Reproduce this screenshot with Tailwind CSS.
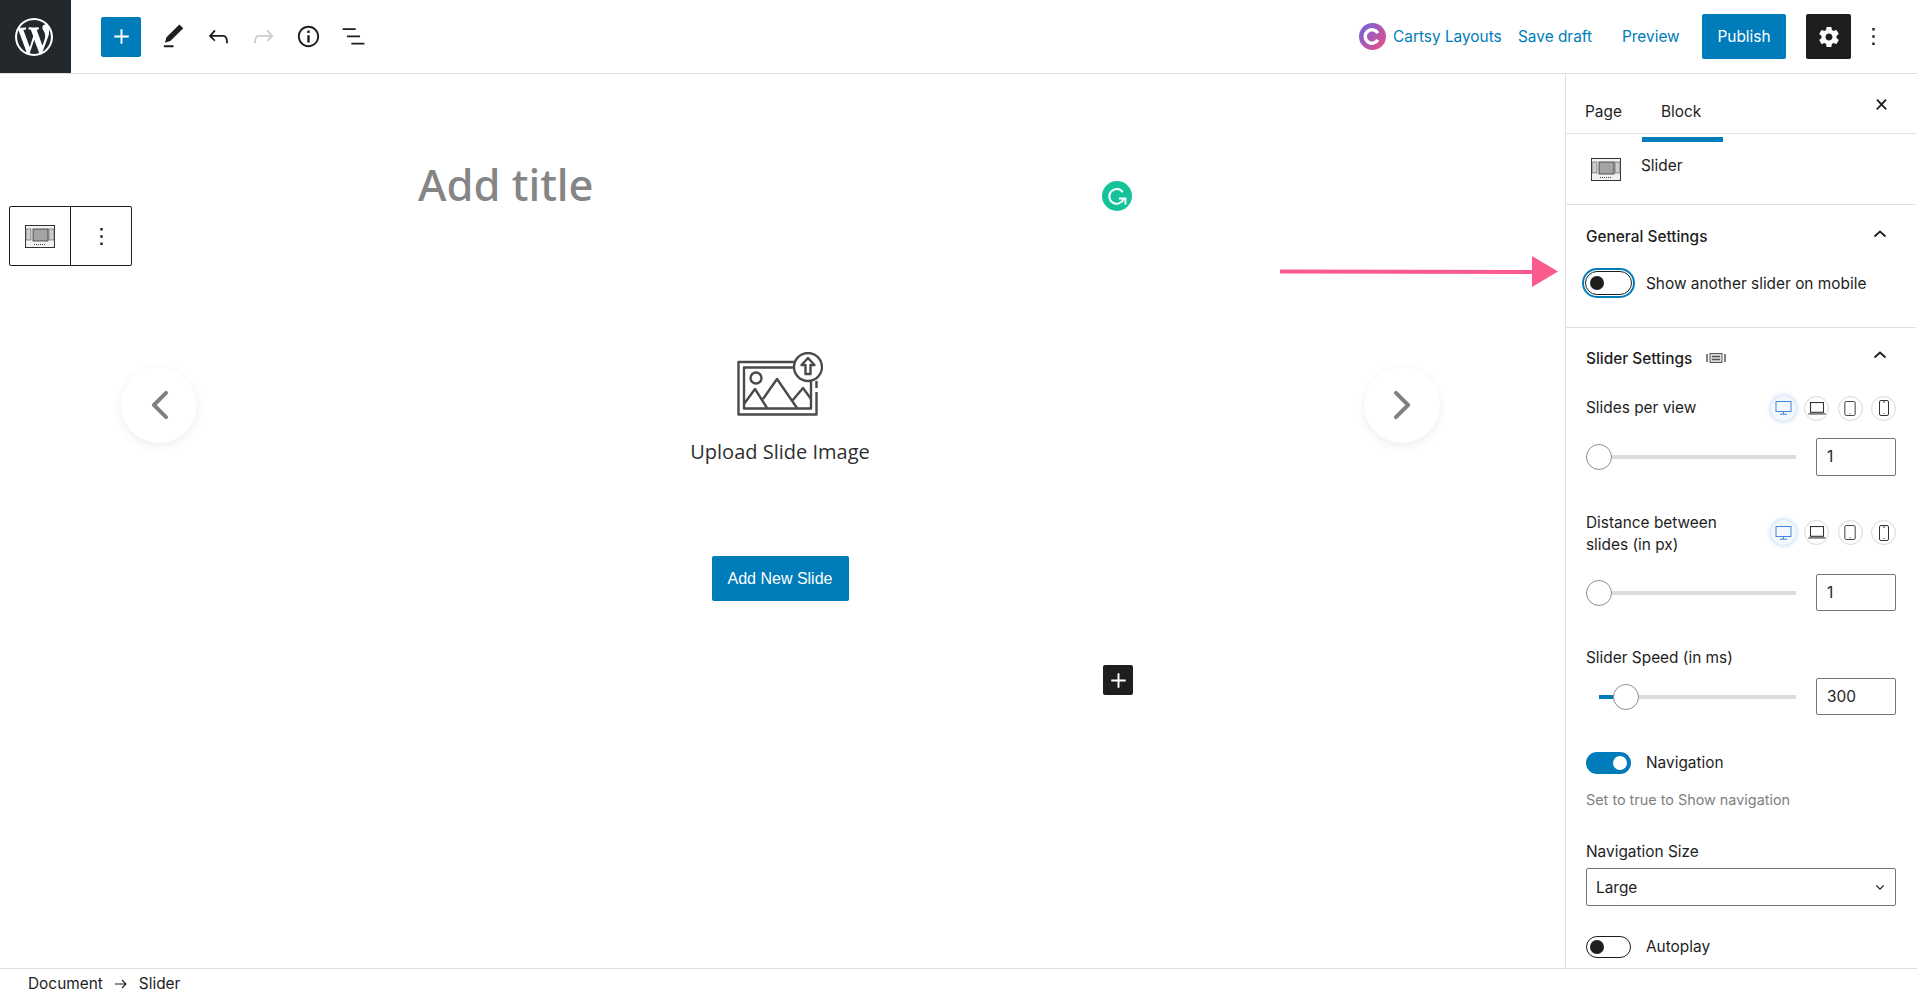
<!DOCTYPE html>
<html><head><meta charset="utf-8"><script src="https://cdn.jsdelivr.net/npm/@tailwindcss/browser@4"></script></head>
<body class="bg-white">
<div class="relative flex h-[993px] w-[1917px] flex-col overflow-hidden font-['Inter',sans-serif] text-[15.4px] text-[#1e1e1e]">
  <!-- header -->
  <header class="flex h-[74px] shrink-0 items-center border-b border-[#e0e0e0] pr-[29px]">
    <div class="flex h-[73px] w-[71px] items-center justify-center bg-[#23282d] pr-[4px]">
      <svg viewBox="0 0 20 20" class="size-[38px] fill-white"><path d="M20 10c0-5.51-4.49-10-10-10C4.48 0 0 4.49 0 10c0 5.52 4.48 10 10 10 5.51 0 10-4.48 10-10zM7.78 15.37L4.37 6.22c.55-.02 1.17-.08 1.17-.08.5-.06.44-1.13-.06-1.11 0 0-1.45.11-2.37.11-.18 0-.37 0-.58-.01C4.12 2.69 6.87 1.11 10 1.11c2.33 0 4.45.87 6.05 2.34-.68-.11-1.65.39-1.65 1.58 0 .74.45 1.36.9 2.1.35.61.55 1.36.55 2.46 0 1.49-1.4 5-1.4 5l-3.03-8.37c.54-.02.82-.17.82-.17.5-.05.44-1.25-.06-1.22 0 0-1.44.12-2.38.12-.87 0-2.33-.12-2.33-.12-.5-.03-.56 1.2-.06 1.22l.92.08 1.26 3.41zM17.41 10c.24-.64.74-1.87.43-4.25.7 1.29 1.05 2.71 1.05 4.25 0 3.29-1.73 6.24-4.4 7.78.97-2.59 1.94-5.2 2.92-7.78zM6.1 18.09C3.12 16.65 1.11 13.53 1.11 10c0-1.3.23-2.48.72-3.59C3.25 10.3 4.67 14.2 6.1 18.09zm4.03-6.63l2.58 6.98c-.86.29-1.76.45-2.71.45-.79 0-1.57-.11-2.29-.33.81-2.38 1.62-4.74 2.42-7.1z"/></svg>
    </div>
    <div class="ml-[30px] flex size-10 items-center justify-center rounded-[2px] bg-[#007cba]">
      <svg viewBox="0 0 24 24" class="size-[29px] fill-white"><path d="M18 11.2h-5.200V6h-1.600v5.200H6v1.600h5.200V18h1.600v-5.200H18z"/></svg>
    </div>
    <div class="ml-[18px] flex items-center gap-[16px] fill-[#1e1e1e]">
      <svg viewBox="0 0 24 24" class="size-[29px]"><path d="M20.1 5.1L16.9 2 6.2 12.7l-1.3 4.4 4.5-1.3L20.1 5.1zM4 20.8h8v-1.5H4v1.5z"/></svg>
      <svg viewBox="0 0 24 24" class="size-[29px]"><path d="M18.3 11.7c-.6-.6-1.4-.9-2.3-.9H6.7l2.9-3.3-1.1-1-4.5 5L8.5 16l1-1-2.7-2.7H16c.5 0 .9.2 1.3.5 1 1 1 3.4 1 4.5v.3h1.5v-.2c0-1.5 0-4.3-1.5-5.7z"/></svg>
      <svg viewBox="0 0 24 24" class="size-[29px] fill-[#ccc]"><path d="M15.6 6.5l-1.1 1 2.9 3.3H8c-.9 0-1.7.3-2.3.9-1.4 1.5-1.4 4.2-1.4 5.6v.2h1.5v-.3c0-1.1 0-3.5 1-4.5.3-.3.7-.5 1.3-.5h9.2L14.5 15l1.1 1.1 4.6-4.6-4.6-5z"/></svg>
      <svg viewBox="0 0 24 24" class="size-[29px]"><path d="M12 3.2c-4.8 0-8.8 3.9-8.8 8.8 0 4.8 3.9 8.8 8.8 8.8 4.8 0 8.8-3.9 8.8-8.8 0-4.8-4-8.8-8.8-8.8zm0 16c-4 0-7.2-3.3-7.2-7.2C4.8 8 8 4.8 12 4.8s7.2 3.3 7.2 7.2c0 4-3.2 7.2-7.2 7.2zM11 17h2v-6h-2v6zm0-8h2V7h-2v2z"/></svg>
      <svg viewBox="0 0 24 24" class="size-[29px]"><path d="M13.8 5.2H3v1.5h10.8V5.2zm-3.6 12v1.5H21v-1.5H10.2zm7.2-6H6.6v1.5h10.8v-1.5z"/></svg>
    </div>
    <div class="ml-auto flex items-center text-[#007cba]">
      <svg viewBox="0 0 28 28" class="mr-[7px] size-[27px]"><defs><linearGradient id="cg" x1="0" y1="0" x2="1" y2="1"><stop offset="0" stop-color="#6a62e6"/><stop offset="1" stop-color="#ee4f7f"/></linearGradient></defs><circle cx="14" cy="14" r="14" fill="url(#cg)"/><path d="M19.5 17.5a7 7 0 1 1 0-7" fill="none" stroke="#fff" stroke-width="3.6"/></svg>
      <span class="w-[110px] whitespace-nowrap">Cartsy Layouts</span>
      <span class="ml-[15px] w-[75px] whitespace-nowrap">Save draft</span>
      <span class="ml-[29px] w-[58px] whitespace-nowrap">Preview</span>
      <span class="ml-[22px] flex h-[45px] w-[84px] items-center justify-center rounded-[2px] bg-[#007cba] text-white">Publish</span>
      <span class="ml-[20px] flex h-[45px] w-[45px] items-center justify-center rounded-[2px] bg-[#1e1e1e]">
        <svg viewBox="0 0 24 24" class="size-[24px] fill-white"><path d="M19.43 12.98c.04-.32.07-.64.07-.98s-.03-.66-.07-.98l2.11-1.65c.19-.15.24-.42.12-.64l-2-3.46c-.12-.22-.39-.3-.61-.22l-2.49 1c-.52-.4-1.08-.73-1.69-.98l-.38-2.65C14.46 2.18 14.25 2 14 2h-4c-.25 0-.46.18-.49.42l-.38 2.65c-.61.25-1.17.59-1.69.98l-2.49-1c-.23-.09-.49 0-.61.22l-2 3.46c-.13.22-.07.49.12.64l2.11 1.65c-.04.32-.07.65-.07.98s.03.66.07.98l-2.11 1.65c-.19.15-.24.42-.12.64l2 3.46c.12.22.39.3.61.22l2.49-1c.52.4 1.08.73 1.69.98l.38 2.65c.03.24.24.42.49.42h4c.25 0 .46-.18.49-.42l.38-2.65c.61-.25 1.17-.59 1.69-.98l2.49 1c.23.09.49 0 .61-.22l2-3.46c.12-.22.07-.49-.12-.64l-2.11-1.65zM12 15.5c-1.93 0-3.5-1.57-3.5-3.5s1.57-3.5 3.5-3.5 3.5 1.57 3.5 3.5-1.57 3.5-3.5 3.5z"/></svg>
      </span>
      <svg viewBox="0 0 24 24" class="ml-[8px] size-[29px] fill-[#1e1e1e]"><path d="M13 19h-2v-2h2v2zm0-6h-2v-2h2v2zm0-6h-2V5h2v2z"/></svg>
    </div>
  </header>

  <!-- body -->
  <div class="flex min-h-0 flex-1">
    <main class="relative flex-1">
      <div class="mx-auto w-[729px] pt-[80px] font-['Noto_Sans',sans-serif] text-[43.5px] leading-[60px] font-medium text-[#858585]">Add title</div>
      <div class="flex w-[1560px] flex-col items-center pt-[138px]">
        <svg viewBox="0 0 86 64" class="h-[64px] w-[86px]" fill="none" stroke="#4a4a4a" stroke-width="2.4" stroke-linejoin="round">
          <path d="M57 10H1.500v52.500h78V40M79.500 36v-7"/>
          <path d="M57 15.500H7v41h67V29" />
          <circle cx="19" cy="26" r="5.500"/>
          <path d="M7 52l11-15 12 19M26 47l14-20 20 29M55 49l11-13 8 11"/>
          <circle cx="71" cy="15" r="14"/>
          <path d="M71 6l-6.500 7h4v9h5v-9h4z"/>
        </svg>
        <div class="mt-[22px] font-['Open_Sans',sans-serif] text-[20px] leading-[28px] text-[#2f2f2f]">Upload Slide Image</div>
        <div class="mt-[90px] flex h-[45px] w-[137px] items-center justify-center rounded-[2px] bg-[#007cba] font-['Liberation_Sans',sans-serif] text-[16px] text-white">Add New Slide</div>
      </div>

      <!-- floating items -->
      <div class="absolute left-[9px] top-[132px] flex h-[60px] w-[123px] rounded-[2px] border border-[#1e1e1e] bg-white">
        <div class="flex w-[61px] items-center justify-center border-r border-[#1e1e1e]">
          <svg viewBox="0 0 30 23" class="h-[23px] w-[30px]"><rect x=".5" y=".5" width="29" height="22" fill="#f1f1f1" stroke="#333"/><rect x="1" y="4" width="5" height="11" fill="#ccc" stroke="#555" stroke-width=".6"/><rect x="24" y="4" width="5" height="11" fill="#ccc" stroke="#555" stroke-width=".6"/><rect x="8" y="4" width="15" height="12" fill="#a3a3a3" stroke="#333" stroke-width=".8"/><path d="M9 19.5h12" stroke="#444" stroke-dasharray="1 1"/></svg>
        </div>
        <div class="flex flex-1 items-center justify-center">
          <svg viewBox="0 0 24 24" class="size-[29px] fill-[#1e1e1e]"><path d="M13 19h-2v-2h2v2zm0-6h-2v-2h2v2zm0-6h-2V5h2v2z"/></svg>
        </div>
      </div>
      <div class="absolute left-[121px] top-[293px] flex size-[76px] items-center justify-center rounded-full bg-white shadow-[0_3px_10px_rgba(0,0,0,0.07)]">
        <svg viewBox="0 0 20 32" class="h-[30px] w-[19px]" fill="none" stroke="#808080" stroke-width="4.200" stroke-linecap="round" stroke-linejoin="round"><path d="M17 3L4 16l13 13"/></svg>
      </div>
      <div class="absolute left-[1364px] top-[293px] flex size-[76px] items-center justify-center rounded-full bg-white shadow-[0_3px_10px_rgba(0,0,0,0.07)]">
        <svg viewBox="0 0 20 32" class="h-[30px] w-[19px]" fill="none" stroke="#808080" stroke-width="4.200" stroke-linecap="round" stroke-linejoin="round"><path d="M3 3l13 13-13 13"/></svg>
      </div>
      <svg viewBox="0 0 30 30" class="absolute left-[1102px] top-[107px] size-[30px]"><circle cx="15" cy="15" r="15" fill="#15c39a"/><path d="M20.800 11.200A7.400 7.400 0 1 0 21.600 18" fill="none" stroke="#fff" stroke-width="2"/><path d="M17 17.500h6.400v6" fill="none" stroke="#fff" stroke-width="2"/></svg>
      <div class="absolute left-[1103px] top-[591px] flex size-[30px] items-center justify-center rounded-[2px] bg-[#1e1e1e]">
        <svg viewBox="0 0 24 24" class="size-[29px] fill-white"><path d="M18 11.2h-5.200V6h-1.600v5.200H6v1.600h5.200V18h1.600v-5.200H18z"/></svg>
      </div>
      <svg viewBox="0 0 278 32" class="absolute left-[1280px] top-[182px] h-[32px] w-[278px]"><path d="M0 13.500l252 .5V0l26 15.500-26 15.500V18L0 17.500z" fill="#fb5a8c"/></svg>
    </main>

    <!-- sidebar -->
    <aside class="flex w-[352px] shrink-0 flex-col overflow-hidden border-l border-[#e0e0e0] pr-[1px]">
      <div class="relative flex h-[60px] shrink-0 items-end border-b border-[#e0e0e0] pl-[19px]">
        <span class="pb-[10px]">Page</span>
        <span class="ml-[39px] pb-[10px]">Block</span>
        <span class="absolute left-[76px] top-[63px] h-[5px] w-[81px] bg-[#007cba]"></span>
        <svg viewBox="0 0 24 24" class="absolute right-[20px] top-[16px] size-[29px] fill-[#1e1e1e]"><path d="M13 11.900l3.300-3.400-1.100-1-3.200 3.300-3.200-3.300-1.100 1 3.300 3.400-3.500 3.600 1 1L12 13l3.500 3.500 1-1z"/></svg>
      </div>
      <div class="flex h-[71px] shrink-0 items-start border-b border-[#e0e0e0] pl-[25px] pt-[24px]">
        <svg viewBox="0 0 30 23" class="h-[23px] w-[30px]"><rect x=".5" y=".5" width="29" height="22" fill="#f1f1f1" stroke="#333"/><rect x="1" y="4" width="5" height="11" fill="#ccc" stroke="#555" stroke-width=".6"/><rect x="24" y="4" width="5" height="11" fill="#ccc" stroke="#555" stroke-width=".6"/><rect x="8" y="4" width="15" height="12" fill="#a3a3a3" stroke="#333" stroke-width=".8"/><path d="M9 19.500h12" stroke="#444" stroke-dasharray="1 1"/></svg>
        <span class="ml-[20px] -mt-[2px] leading-[20px]">Slider</span>
      </div>
      <section class="h-[123px] shrink-0 border-b border-[#e0e0e0] pl-[20px] pr-[20px]">
        <div class="flex h-[55px] items-end justify-between pb-[12px] font-medium">
          <span>General Settings</span>
          <svg viewBox="0 0 24 24" class="mb-[2px] mr-[4px] size-[24px]" fill="none" stroke="#1e1e1e" stroke-width="1.800"><path d="M6.500 14.500l5.500-5 5.500 5"/></svg>
        </div>
        <div class="mt-[8px] flex items-center">
          <span class="-ml-[4px] flex h-[30px] w-[53px] items-center rounded-full border-2 border-[#007cba] p-[1px]">
            <span class="flex h-[24px] w-full items-center rounded-full border border-[#1e1e1e] pl-[4px]"><span class="size-[14px] rounded-full bg-[#1e1e1e]"></span></span>
          </span>
          <span class="ml-[11px] whitespace-nowrap pt-[1px]">Show another slider on mobile</span>
        </div>
      </section>
      <section class="min-h-0 flex-1 pl-[20px] pr-[20px]">
        <div class="flex h-[53px] items-end justify-between pb-[11px] font-medium">
          <span class="flex items-center gap-[14px]">Slider Settings
            <svg viewBox="0 0 20 10" class="h-[10px] w-[20px]"><rect x="4" y=".5" width="12" height="9" fill="#ddd" stroke="#555"/><path d="M6 3.500h8M6 6.500h8M1 1v8M19 1v8" stroke="#555" stroke-width="1.500"/></svg>
          </span>
          <svg viewBox="0 0 24 24" class="mb-[3px] mr-[4px] size-[24px]" fill="none" stroke="#1e1e1e" stroke-width="1.800"><path d="M6.500 14.500l5.500-5 5.500 5"/></svg>
        </div>

        <div class="mt-[15px] flex h-[24px] items-center justify-between">
          <span>Slides per view</span>
          <div class="flex gap-[8.500px]">
            <span class="flex size-[25px] items-center justify-center rounded-full bg-[#f4f8fd] shadow-[0_0_5px_rgba(60,130,220,0.45)]"><svg viewBox="0 0 16 14" class="h-[14px] w-[17px]" fill="none" stroke="#3f87d6"><rect x=".5" y=".5" width="15" height="10"/><path d="M8 11v2M4.500 13.200h7"/></svg></span>
            <span class="flex size-[25px] items-center justify-center rounded-full border border-[#d8d8d8]"><svg viewBox="0 0 16 12" class="h-[13px] w-[18px]" fill="none" stroke="#333"><rect x="2" y=".5" width="12" height="9"/><path d="M0 11h16"/></svg></span>
            <span class="flex size-[25px] items-center justify-center rounded-full border border-[#d8d8d8]"><svg viewBox="0 0 12 16" class="h-[15px] w-[12px]" fill="none" stroke="#333"><rect x=".5" y=".5" width="11" height="15" rx="1.500"/><path d="M5.500 13.500h1"/></svg></span>
            <span class="flex size-[25px] items-center justify-center rounded-full border border-[#d8d8d8]"><svg viewBox="0 0 10 16" class="h-[16px] w-[10px]" fill="none" stroke="#333"><rect x=".5" y=".5" width="9" height="15" rx="1.500"/><path d="M4 2h2M4.500 13.500h1"/></svg></span>
          </div>
        </div>
        <div class="mt-[18px] flex h-[38px] items-center justify-between">
          <div class="relative flex h-[26px] w-[210px] items-center"><span class="h-[4px] w-full bg-[#dcdcde]"></span><span class="absolute left-0 size-[26px] rounded-full border border-[#8c8f94] bg-white"></span></div>
          <span class="flex h-[38px] w-[80px] items-center rounded-[2px] border border-[#757575] pl-[10px]">1</span>
        </div>

        <div class="mt-[36px] flex items-start justify-between">
          <span class="leading-[22px]">Distance between<br>slides (in px)</span>
          <div class="mt-[-1px] flex gap-[8.500px] pt-[9px]">
            <span class="flex size-[25px] items-center justify-center rounded-full bg-[#f4f8fd] shadow-[0_0_5px_rgba(60,130,220,0.45)]"><svg viewBox="0 0 16 14" class="h-[14px] w-[17px]" fill="none" stroke="#3f87d6"><rect x=".5" y=".5" width="15" height="10"/><path d="M8 11v2M4.500 13.200h7"/></svg></span>
            <span class="flex size-[25px] items-center justify-center rounded-full border border-[#d8d8d8]"><svg viewBox="0 0 16 12" class="h-[13px] w-[18px]" fill="none" stroke="#333"><rect x="2" y=".5" width="12" height="9"/><path d="M0 11h16"/></svg></span>
            <span class="flex size-[25px] items-center justify-center rounded-full border border-[#d8d8d8]"><svg viewBox="0 0 12 16" class="h-[15px] w-[12px]" fill="none" stroke="#333"><rect x=".5" y=".5" width="11" height="15" rx="1.500"/><path d="M5.500 13.500h1"/></svg></span>
            <span class="flex size-[25px] items-center justify-center rounded-full border border-[#d8d8d8]"><svg viewBox="0 0 10 16" class="h-[16px] w-[10px]" fill="none" stroke="#333"><rect x=".5" y=".5" width="9" height="15" rx="1.500"/><path d="M4 2h2M4.500 13.500h1"/></svg></span>
          </div>
        </div>
        <div class="mt-[18px] flex h-[37px] items-center justify-between">
          <div class="relative flex h-[26px] w-[210px] items-center"><span class="h-[4px] w-full bg-[#dcdcde]"></span><span class="absolute left-0 size-[26px] rounded-full border border-[#8c8f94] bg-white"></span></div>
          <span class="flex h-[37px] w-[80px] items-center rounded-[2px] border border-[#757575] pl-[10px]">1</span>
        </div>

        <div class="mt-[36px] leading-[22px]">Slider Speed (in ms)</div>
        <div class="mt-[9px] flex h-[37px] items-center justify-between">
          <div class="relative ml-[13px] flex h-[26px] w-[197px] items-center"><span class="h-[4px] w-full bg-[#dcdcde]"></span><span class="absolute left-0 h-[4px] w-[20px] bg-[#007cba]"></span><span class="absolute left-[14px] size-[26px] rounded-full border border-[#8c8f94] bg-white"></span></div>
          <span class="flex h-[37px] w-[80px] items-center rounded-[2px] border border-[#757575] pl-[10px]">300</span>
        </div>

        <div class="mt-[36px] flex items-center">
          <span class="flex h-[22px] w-[45px] items-center justify-end rounded-full bg-[#007cba] pr-[4px]"><span class="size-[14px] rounded-full bg-white"></span></span>
          <span class="ml-[15px]">Navigation</span>
        </div>
        <p class="mt-[16px] text-[14.4px] leading-[20px] text-[#808080]">Set to true to Show navigation</p>

        <div class="mt-[31px] leading-[22px]">Navigation Size</div>
        <div class="mt-[5px] flex h-[38px] items-center justify-between rounded-[2px] border border-[#757575] pl-[9px] pr-[10px]">
          <span>Large</span>
          <svg viewBox="0 0 12 8" class="h-[7px] w-[10px]" fill="none" stroke="#1e1e1e" stroke-width="1.500"><path d="M1.500 1.500L6 6l4.500-4.500"/></svg>
        </div>
        <div class="mt-[29px] flex items-center">
          <span class="flex h-[22px] w-[45px] items-center rounded-full border border-[#1e1e1e] pl-[3px]"><span class="size-[14px] rounded-full bg-[#1e1e1e]"></span></span>
          <span class="ml-[15px]">Autoplay</span>
        </div>
      </section>
    </aside>
  </div>

  <!-- footer -->
  <footer class="flex h-[25px] shrink-0 items-center border-t border-[#e0e0e0] pl-[28px] pt-[6px]">
    <span>Document</span>
    <svg viewBox="0 0 12 10" class="mx-[12px] h-[10px] w-[12px]" fill="none" stroke="#1e1e1e" stroke-width="1.100"><path d="M0 5h11M7 1l4 4-4 4"/></svg>
    <span>Slider</span>
  </footer>
</div>
</body></html>
